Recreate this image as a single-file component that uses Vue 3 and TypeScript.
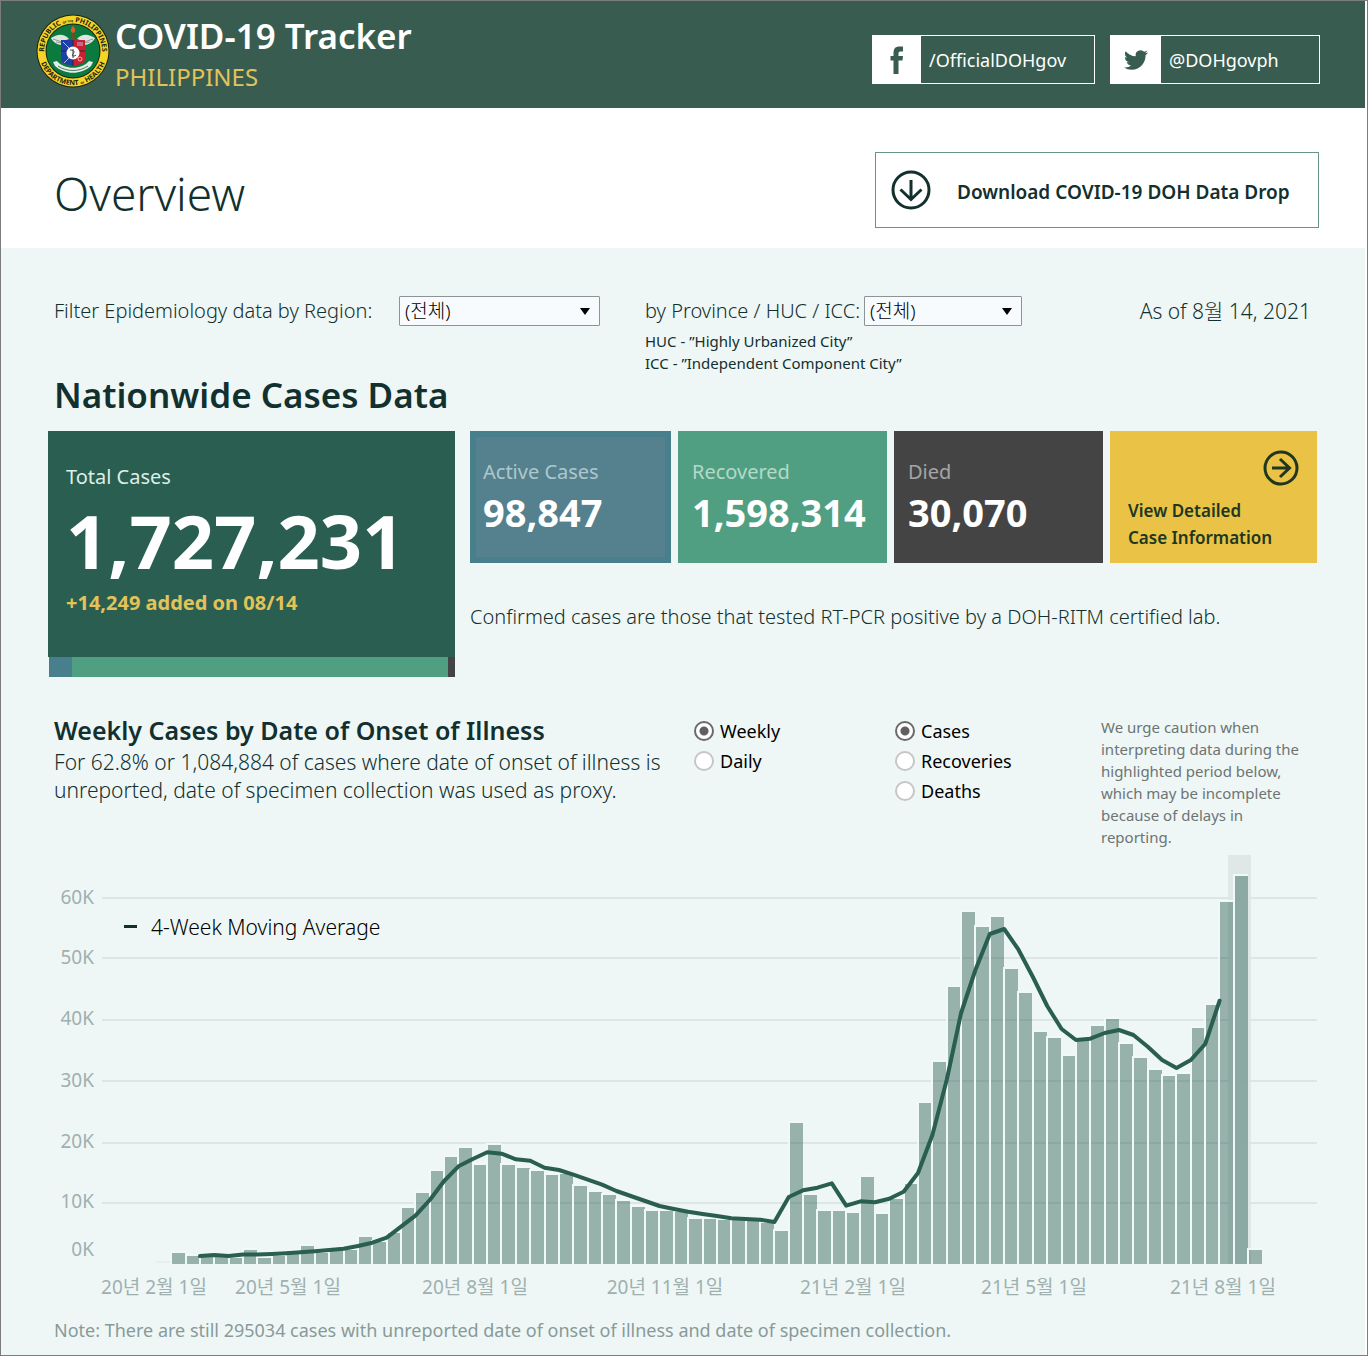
<script setup lang="ts">
import { computed, ref } from 'vue'

interface Tick { label: string; y: number; textY: number }
interface Month { label: string; x: number }
interface Stat { label: string; value: string; kind: string }

const region = ref('all')
const province = ref('all')
const period = ref('Weekly')
const measure = ref('Cases')
const periods = ['Weekly', 'Daily']
const measures = ['Cases', 'Recoveries', 'Deaths']

const stats: Stat[] = [
  { label: 'Active Cases', value: '98,847', kind: 'active' },
  { label: 'Recovered', value: '1,598,314', kind: 'recovered' },
  { label: 'Died', value: '30,070', kind: 'died' },
]

const ticks: Tick[] = [
  { label: '60K', y: 43, textY: 49 },
  { label: '50K', y: 103, textY: 109 },
  { label: '40K', y: 165, textY: 170 },
  { label: '30K', y: 226, textY: 232 },
  { label: '20K', y: 288, textY: 293 },
  { label: '10K', y: 348, textY: 353 },
]

const months: Month[] = [
  { label: '20년 2월 1일', x: 106 },
  { label: '20년 5월 1일', x: 240 },
  { label: '20년 8월 1일', x: 427 },
  { label: '20년 11월 1일', x: 617 },
  { label: '21년 2월 1일', x: 805 },
  { label: '21년 5월 1일', x: 986 },
  { label: '21년 8월 1일', x: 1175 },
]

const baseline = 409
const step = 14.36

/* weekly bar heights, in chart units above the baseline */
const weekly = [
  11, 8, 7, 7, 6, 14, 6, 8, 13, 18, 11, 15, 14, 27, 22, 31, 56, 71, 93, 107,
  116, 99, 119, 99, 96, 93, 89, 90, 78, 72, 69, 63, 57, 53, 53, 52, 45, 45, 44, 44,
  44, 41, 33, 141, 69, 53, 53, 51, 87, 50, 65, 80, 161, 202, 277, 352, 337, 347, 295, 271,
  232, 226, 208, 224, 238, 245, 220, 206, 194, 188, 190, 236, 259, 362, 388, 14,
]

/* four-week moving average, in chart units above the baseline */
const average = [
  8, 9, 8, 9.5, 9.5, 10, 10.7, 11.7, 12.7, 14, 15.3, 18, 21.3, 26.3, 37.3, 48.3, 64, 83,
  97.7, 105, 111.7, 110.3, 104.7, 103.3, 96.3, 94, 89.3, 84.3, 79.3, 73, 68, 63, 58, 55,
  52.3, 50, 48, 45.7, 45, 44.3, 42, 67, 73.7, 76.3, 80.7, 58.3, 62.7, 61.7, 65.3, 72.3,
  91, 129, 184, 251, 294, 330, 335, 314.3, 287, 258, 235, 224, 225.3, 231, 234, 229,
  217.3, 204, 196, 204, 220, 263.3,
]

const bars = computed(() =>
  weekly.map((h, i) => ({ x: Math.floor(124.7 + i * step), y: baseline - h, h })),
)
const averagePoints = computed(() =>
  average.map((h, i) => `${(152 + i * step).toFixed(1)},${baseline - h}`).join(' '),
)
</script>

<template>
  <div class="page">
    <header class="top">
      <svg class="seal" viewBox="0 0 74 76" aria-hidden="true">
        <defs>
          <path id="arc-top" d="M8.6 44A29 29 0 1 1 65.4 44" />
          <path id="arc-bottom" d="M3.7 45A34 34 0 0 0 70.3 45" />
        </defs>
        <circle cx="37" cy="38" r="36.5" fill="#1c2410" />
        <circle cx="37" cy="38" r="35.5" fill="#f5d327" />
        <circle cx="37" cy="38" r="27.5" fill="#1c2410" />
        <circle cx="37" cy="38" r="26.5" fill="#0b7a3f" />
        <text class="seal-text"><textPath href="#arc-top" startOffset="50%" text-anchor="middle">REPUBLIC <tspan class="seal-small">OF THE</tspan> PHILIPPINES</textPath></text>
        <text class="seal-text"><textPath href="#arc-bottom" startOffset="50%" text-anchor="middle">DEPARTMENT <tspan class="seal-small">OF</tspan> HEALTH</textPath></text>
        <path d="M33 26c-5-6-12-5-18-1 2 4 6 7 11 7l1-4zM41 26c5-6 12-5 18-1-2 4-6 7-11 7l-1-4z" fill="#dfe4df" />
        <path d="M17 26l9 3M20 29l7 1M57 26l-9 3M54 29l-7 1" stroke="#8f9f98" stroke-width="1" />
        <path d="M35.5 20h3v8h-3z" fill="#7b4a18" />
        <path d="M37 13c3 3 3 6 0 7-3-1-3-4 0-7z" fill="#e5562c" />
        <path d="M25 27h12v26c-7-2-12-2-12-7z" fill="#1f3fa8" />
        <path d="M37 27h12v19c0 5-5 5-12 7z" fill="#c9202d" />
        <path d="M25 38h24M37 27v26" stroke="#20264f" stroke-width="1" />
        <path d="M27 29l6 6M28 50l6-6M41 30h6M41 32h6" stroke="#aebde8" stroke-width="1" />
        <circle cx="44" cy="46" r="2" fill="none" stroke="#f0b0b0" />
        <circle cx="37" cy="40" r="6.5" fill="#fff" />
        <path d="M34 37c4 0 5 2 3 4s1 3 3 1M37 36v9" fill="none" stroke="#38414c" stroke-width="1" />
        <path d="M17 49l4-1c7 9 25 9 32 0l4 1-2 4c-10 9-26 9-36 0z" fill="#e6ece6" />
        <path d="M22 53c9 6 21 6 30 0" fill="none" stroke="#567a67" stroke-width="1" />
      </svg>
      <div class="brand">
        <h1>COVID-19 Tracker</h1>
        <p>PHILIPPINES</p>
      </div>
      <nav class="social" aria-label="Social media">
        <a href="#facebook" class="facebook">
          <span class="social-icon">
            <svg width="14" height="28" viewBox="0 0 14 28" aria-hidden="true">
              <path d="M13 .5v5h-2.5c-1.5 0-2 .7-2 2V10H13l-.5 4.5h-4V28h-5V14.500H.5V10h3V7c0-4.500 2-6.500 6-6.500z" fill="#385d50" />
            </svg>
          </span>
          <span class="social-name">/OfficialDOHgov</span>
        </a>
        <a href="#twitter" class="twitter">
          <span class="social-icon">
            <svg width="24" height="26" viewBox="0 0 24 24" aria-hidden="true">
              <path d="M23.953 4.570a10 10 0 01-2.825.775 4.958 4.958 0 002.163-2.723c-.951.555-2.005.959-3.127 1.184a4.920 4.920 0 00-8.384 4.482C7.690 8.095 4.067 6.130 1.640 3.162a4.822 4.822 0 00-.666 2.475c0 1.710.87 3.213 2.188 4.096a4.904 4.904 0 01-2.228-.616v.060a4.923 4.923 0 003.946 4.827 4.996 4.996 0 01-2.212.085 4.936 4.936 0 004.604 3.417 9.867 9.867 0 01-6.102 2.105c-.39 0-.779-.023-1.170-.067a13.995 13.995 0 007.557 2.209c9.053 0 13.998-7.496 13.998-13.985 0-.21 0-.42-.015-.63A9.935 9.935 0 0024 4.590z" fill="#385d50" />
            </svg>
          </span>
          <span class="social-name">@DOHgovph</span>
        </a>
      </nav>
    </header>

    <section class="title-bar">
      <h2>Overview</h2>
      <a href="#data-drop" class="download">
        <svg width="40" height="40" viewBox="0 0 40 40" aria-hidden="true">
          <circle cx="20" cy="20" r="18" />
          <path d="M20 10v19M9.5 19.5L20 29.5l10.5-10" />
        </svg>
        <span>Download COVID-19 DOH Data Drop</span>
      </a>
    </section>

    <main>
      <section class="filters">
        <div class="filter region">
          <label for="region">Filter Epidemiology data by Region:</label>
          <span class="select-box">
            <select id="region" v-model="region"><option value="all">(전체)</option></select>
          </span>
        </div>
        <div class="province">
          <div class="filter">
            <label for="province">by Province / HUC / ICC:</label>
            <span class="select-box">
              <select id="province" v-model="province"><option value="all">(전체)</option></select>
            </span>
          </div>
          <p>HUC - ”Highly Urbanized City”<br />ICC - ”Independent Component City”</p>
        </div>
        <p class="as-of">As of 8월 14, 2021</p>
      </section>

      <h2 class="cases-title">Nationwide Cases Data</h2>
      <section class="cards">
        <div class="total-column">
          <div class="total">
            <p class="total-label">Total Cases</p>
            <p class="total-value">1,727,231</p>
            <p class="total-added">+14,249 added on 08/14</p>
          </div>
          <div class="share"><i class="share-active" /><i class="share-recovered" /><i class="share-died" /></div>
        </div>
        <div class="detail-column">
          <div class="stats">
            <div v-for="s in stats" :key="s.kind" class="stat" :class="s.kind">
              <p class="stat-label">{{ s.label }}</p>
              <p class="stat-value">{{ s.value }}</p>
            </div>
            <a href="#details" class="stat details">
              <svg width="36" height="36" viewBox="0 0 36 36" aria-hidden="true">
                <circle cx="18" cy="18" r="16" />
                <path d="M9 18h17M17 9l9.5 9-9.5 9" />
              </svg>
              <span>View Detailed<br />Case Information</span>
            </a>
          </div>
          <p class="confirmed">Confirmed cases are those that tested RT-PCR positive by a DOH-RITM certified lab.</p>
        </div>
      </section>

      <section class="trend-head">
        <div class="trend-text">
          <h3>Weekly Cases by Date of Onset of Illness</h3>
          <p>For 62.8% or 1,084,884 of cases where date of onset of illness is<br />unreported, date of specimen collection was used as proxy.</p>
        </div>
        <div class="choices period" role="radiogroup" aria-label="Period">
          <label v-for="p in periods" :key="p"><input v-model="period" type="radio" name="period" :value="p" />{{ p }}</label>
        </div>
        <div class="choices measure" role="radiogroup" aria-label="Measure">
          <label v-for="m in measures" :key="m"><input v-model="measure" type="radio" name="measure" :value="m" />{{ m }}</label>
        </div>
        <p class="caution">We urge caution when interpreting data during the highlighted period below, which may be incomplete because of delays in reporting.</p>
      </section>

      <svg class="chart" viewBox="0 0 1269 448" role="img" aria-label="Weekly cases with 4-week moving average">
        <rect class="highlight" x="1180" y="0" width="23" height="409" />
        <g v-for="t in ticks" :key="t.label">
          <line class="grid" x1="54" x2="1269" :y1="t.y" :y2="t.y" />
          <text class="axis" x="46" :y="t.textY" text-anchor="end">{{ t.label }}</text>
        </g>
        <text class="axis" x="46" y="401" text-anchor="end">0K</text>
        <line class="grid thin" x1="108" x2="123" y1="407" y2="407" />
        <g v-for="b in bars" :key="b.x">
          <path class="gap" :d="`M${b.x - 1} 409V${b.y - 1}H${b.x + 13}`" />
          <rect class="bar" :x="b.x" :y="b.y" width="13" :height="b.h" />
        </g>
        <polyline class="average" :points="averagePoints" />
        <rect x="76" y="70" width="13" height="3" fill="#12302e" />
        <text class="legend" x="103" y="80">4-Week Moving Average</text>
        <text v-for="m in months" :key="m.label" class="axis" :x="m.x" y="439" text-anchor="middle">{{ m.label }}</text>
      </svg>
      <p class="note">Note: There are still 295034 cases with unreported date of onset of illness and date of specimen collection.</p>
    </main>
  </div>
</template>

<style>
body { margin: 0; background: #fff; }
</style>

<style scoped>
* { box-sizing: border-box; }
h1, h2, h3, p { margin: 0; }
a { text-decoration: none; color: inherit; }
.page {
  border: 1px solid #7c7c7c;
  padding-right: 2px;
  background: #fff;
  color: #12302e;
  font-family: "Noto Sans", "Noto Sans CJK KR", sans-serif;
  font-size: 20px;
  font-weight: 300;
}
.top {
  display: flex;
  height: 107px;
  padding: 12px 45px 0 35px;
  background: #385d50;
}
.seal { width: 74px; height: 76px; flex: none; }
.seal-text { font: 700 7px "Noto Sans", sans-serif; fill: #20240f; }
.seal-small { font-size: 3px; }
.brand { margin-left: 5px; }
.brand h1 { color: #fff; font-size: 35px; line-height: 46px; font-weight: 600; }
.brand p { color: #e2c35a; font-size: 24px; line-height: 36px; font-weight: 400; }
.social { display: flex; gap: 15px; margin: 22px 0 0 auto; }
.social a { display: flex; height: 49px; border: 1px solid #fff; color: #fff; font-size: 18px; font-weight: 400; }
.facebook { width: 223px; }
.twitter { width: 210px; }
.social-icon { display: flex; align-items: center; justify-content: center; width: 48px; background: #fff; }
.twitter .social-icon { width: 50px; }
.social-name { padding-left: 8px; line-height: 49px; }
.title-bar {
  display: flex;
  align-items: center;
  justify-content: space-between;
  height: 140px;
  padding: 24px 46px 0 53px;
}
.title-bar h2 { padding-top: 6px; font-size: 46px; line-height: 60px; font-weight: 300; }
.download {
  display: flex;
  align-items: center;
  gap: 26px;
  width: 444px;
  height: 76px;
  padding-left: 15px;
  border: 1px solid #6a9482;
  font-size: 19px;
  font-weight: 600;
}
.download span { padding-top: 3px; }
.download svg, .details svg { flex: none; fill: none; stroke: currentColor; stroke-width: 3; }
main { padding: 48px 48px 12px 47px; background: #eef7f6; }
.filters { display: flex; height: 78px; padding-left: 6px; }
.filter { display: flex; align-items: center; height: 30px; line-height: 28px; white-space: nowrap; }
.region label { width: 345px; }
.region .select-box { width: 201px; }
.province { margin-left: 45px; }
.province label { width: 219px; }
.province .select-box { width: 158px; }
.province p { padding-top: 4px; font-size: 15px; line-height: 22px; font-weight: 400; }
.select-box { position: relative; height: 30px; }
.select-box::after {
  content: "";
  position: absolute;
  right: 10px;
  top: 12px;
  border: 5px solid transparent;
  border-top: 7px solid #000;
  border-bottom: 0;
  pointer-events: none;
}
select {
  appearance: none;
  width: 100%;
  height: 30px;
  padding: 0 5px;
  border: 1px solid #8c9494;
  border-radius: 1px;
  background: #f8fbfd;
  color: #000;
  font: inherit;
  font-size: 19px;
}
.as-of { margin-left: auto; padding-right: 6px; font-size: 21px; line-height: 30px; }
.cases-title { padding-left: 6px; font-size: 35px; line-height: 42px; font-weight: 600; }
.cards { display: flex; gap: 15px; margin-top: 15px; }
.total-column { flex: 407 1 0; }
.total { height: 226px; padding: 32px 18px 0; background: #2a5e50; }
.total-label { color: #dcefe8; line-height: 28px; font-weight: 400; }
.total-value { color: #fff; font-size: 74px; line-height: 100px; font-weight: 700; }
.total-added { color: #e2c35a; line-height: 24px; font-weight: 700; }
.share { display: flex; height: 20px; padding-left: 1px; }
.share-active { flex: 23; background: #47808c; }
.share-recovered { flex: 376; background: #519f82; }
.share-died { flex: 7; background: #444; }
.detail-column { flex: 847 1 0; }
.stats { display: grid; grid-template-columns: 201fr 209fr 209fr 207fr; gap: 7px; }
.stat { min-width: 0; height: 132px; padding: 27px 14px 0; color: #fff; }
.stat-label { line-height: 28px; font-weight: 400; }
.stat-value { font-size: 38px; line-height: 52px; font-weight: 700; }
.active { padding: 21px 7px 0; border: 6px solid #47808c; background: #55818e; }
.active .stat-label { color: #adc8cc; }
.recovered { background: #519f82; }
.recovered .stat-label { color: #b4d9c9; }
.died { background: #444; }
.died .stat-label { color: #a5a5a5; }
.details { display: flex; flex-direction: column; padding: 19px 18px 0; background: #eac246; color: #20371f; font-size: 17px; line-height: 27px; font-weight: 600; }
.details svg { align-self: flex-end; margin-bottom: 11px; }
.confirmed { margin-top: 40px; line-height: 28px; }
.trend-head { display: flex; height: 141px; margin-top: 37px; padding-left: 6px; }
.trend-text { width: 640px; white-space: nowrap; }
h3 { padding-bottom: 2px; font-size: 25px; line-height: 32px; font-weight: 600; }
.trend-text p { font-size: 21px; line-height: 28px; }
.choices { display: flex; flex-direction: column; padding-top: 2px; color: #000; font-size: 18px; }
.choices label { display: flex; align-items: center; gap: 6px; height: 30px; font-weight: 400; }
.period, .measure { width: 201px; }
input[type="radio"] {
  appearance: none;
  width: 20px;
  height: 20px;
  margin: 0;
  border: 2px solid #c6c6c6;
  border-radius: 50%;
  background: #fff;
}
input[type="radio"]:checked { border-color: #6a6a6a; background: radial-gradient(circle, #606060 4px, #fff 5px); }
.caution { width: 210px; margin-left: 5px; padding-top: 2px; color: #6d7474; font-size: 15px; line-height: 22px; font-weight: 400; }
.chart { display: block; width: 100%; height: auto; }
.highlight { fill: #dfe7e7; }
.grid { stroke: #dde6e5; stroke-width: 2; }
.thin { stroke-width: 1; }
.bar { fill: #2a5e50; fill-opacity: .45; }
.gap { fill: none; stroke: #f1f9f8; stroke-width: 2; }
.average { fill: none; stroke: #2a5e50; stroke-width: 4; stroke-linecap: round; stroke-linejoin: round; }
.axis { fill: #9fb0af; font-size: 19px; font-weight: 400; }
.legend { fill: #000; font-size: 21px; }
.note { padding: 14px 0 0 6px; color: #899a99; font-size: 18px; line-height: 26px; font-weight: 400; }
</style>
